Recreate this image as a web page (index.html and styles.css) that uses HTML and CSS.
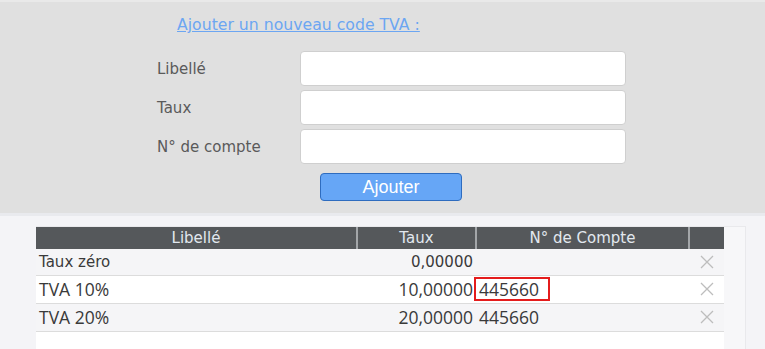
FILE: index.html
```html
<!DOCTYPE html>
<html>
<head>
    <meta charset="UTF-8">
    <title>Codes TVA</title>
    <link rel="stylesheet" href="styles.css">
</head>
<body>

    <div class="add-panel">
        <a href="#" class="add-link">Ajouter un nouveau code TVA :</a>
        <form class="add-form" onsubmit="return false">
            <label for="libelle">Libellé</label>
            <input type="text" id="libelle">
            <label for="taux">Taux</label>
            <input type="text" id="taux">
            <label for="compte">N° de compte</label>
            <input type="text" id="compte">
            <button type="submit" class="btn-add">Ajouter</button>
        </form>
    </div>
    <div class="separator"></div>

    <div class="list">
        <table class="tva-table">
            <colgroup>
                <col class="col-libelle">
                <col class="col-taux">
                <col class="col-compte">
                <col class="col-del">
            </colgroup>
            <thead>
                <tr>
                    <th>Libellé</th>
                    <th>Taux</th>
                    <th>N° de Compte</th>
                    <th></th>
                </tr>
            </thead>
            <tbody>
                <tr class="row-zero">
                    <td>Taux zéro</td>
                    <td class="num">0,00000</td>
                    <td></td>
                    <td class="del"><svg width="14" height="14" viewBox="0 0 14 14"><path d="M1 1L13 13M13 1L1 13"/></svg></td>
                </tr>
                <tr class="odd">
                    <td>TVA 10%</td>
                    <td class="num">10,00000</td>
                    <td><span class="highlight">445660</span></td>
                    <td class="del"><svg width="14" height="14" viewBox="0 0 14 14"><path d="M1 1L13 13M13 1L1 13"/></svg></td>
                </tr>
                <tr>
                    <td>TVA 20%</td>
                    <td class="num">20,00000</td>
                    <td>445660</td>
                    <td class="del"><svg width="14" height="14" viewBox="0 0 14 14"><path d="M1 1L13 13M13 1L1 13"/></svg></td>
                </tr>
                <tr class="filler">
                    <td colspan="4"></td>
                </tr>
            </tbody>
        </table>
    </div>

</body>
</html>
```

FILE: styles.css
```css
* {
    margin: 0;
    padding: 0;
    box-sizing: border-box;
}

body {
    background: #f4f4f7;
    font-family: "DejaVu Sans", sans-serif;
    color: #555;
    border-top: 2px solid #e9e9e9;
    overflow: hidden;
}

.add-panel {
    background: #e0e0e0;
    height: 211px;
    padding-top: 13px;
}

.add-link {
    display: inline-block;
    margin-left: 177px;
    font-size: 15.7px;
    color: #6ca6f2;
    text-decoration: underline;
}

.add-form {
    display: grid;
    grid-template-columns: 143px 326px;
    row-gap: 4px;
    margin: 17px 0 0 157px;
    align-items: center;
}

.add-form label {
    font-size: 15px;
    color: #5a5a5a;
}

.add-form input {
    height: 35px;
    border: 1px solid #cfcfcf;
    border-radius: 4px;
    background: #fff;
}

.btn-add {
    grid-column: 2;
    margin: 5px 0 0 20px;
    width: 142px;
    height: 28px;
    background: #66a6f6;
    border: 1px solid #2e6cbf;
    border-radius: 4px;
    color: #fff;
    font-family: "Liberation Sans", Arial, sans-serif;
    font-size: 18px;
    cursor: pointer;
}

.separator {
    height: 3px;
    background: #e9eaee;
}

.list {
    margin: 10px 0 0 36px;
    width: 710px;
    background: #f7f7f9;
    border: 1px solid #e9e9ec;
    border-left: none;
    border-bottom: none;
}

.tva-table {
    border-collapse: collapse;
    width: 688px;
    table-layout: fixed;
}

.col-libelle { width: 321px; }
.col-taux { width: 119px; }
.col-compte { width: 213px; }
.col-del { width: 35px; }

.tva-table th {
    background: #55585b;
    color: #e2e8ef;
    font-weight: normal;
    font-size: 15px;
    height: 22px;
    text-align: center;
    border-left: 2px solid #a3a6a9;
}

.tva-table th:first-child {
    border-left: none;
}

.tva-table td {
    font-family: "Open Sans", sans-serif;
    font-size: 17.5px;
    color: #3a3a3a;
    height: 28px;
    padding: 0 3px;
    background: #f5f5f7;
    border-bottom: 1px solid #dcdcdc;
    white-space: nowrap;
}

.tva-table .odd td {
    background: #fff;
}

.tva-table .row-zero td {
    font-family: "DejaVu Sans", sans-serif;
    font-size: 15px;
    height: 26px;
}

.tva-table td.num {
    text-align: right;
}

.highlight {
    display: inline-block;
    margin-left: -5px;
    padding: 0 0 0 3px;
    width: 76px;
    height: 24px;
    line-height: 20px;
    border: 2px solid #e41c1c;
}

.del {
    text-align: center;
}

.del svg {
    display: block;
    margin: 0 auto;
}

.del svg path {
    stroke: #bdbdbd;
    stroke-width: 1.3;
    fill: none;
}

.tva-table .filler td {
    background: #fff;
    border-bottom: none;
    height: 18px;
}
```
